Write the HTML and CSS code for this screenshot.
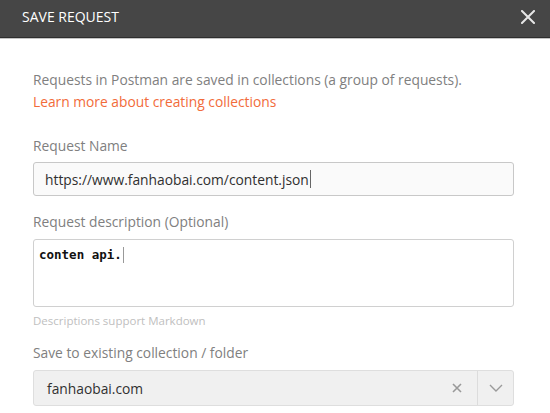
FILE: index.html
```html
<!DOCTYPE html>
<html>
<head>
<meta charset="utf-8">
<link rel="stylesheet" href="styles.css">
</head>
<body>
<div class="modal">
  <div class="header">
    <span class="title">SAVE REQUEST</span>
    <svg class="close" width="14" height="14" viewBox="0 0 14 14"><path d="M1 1 L13 13 M13 1 L1 13" stroke="#e6e6e6" stroke-width="2" stroke-linecap="square"/></svg>
  </div>
  <div class="content">
    <p class="intro">Requests in Postman are saved in collections (a group of requests).<br><a class="link">Learn more about creating collections</a></p>
    <label class="label label-name">Request Name</label>
    <div class="input">https://www.fanhaobai.com/content.json<span class="caret"></span></div>
    <label class="label label-desc">Request description (Optional)</label>
    <div class="textarea">conten api.<span class="caret"></span></div>
    <div class="hint">Descriptions support Markdown</div>
    <label class="label label-coll">Save to existing collection / folder</label>
    <div class="select">
      <span class="value">fanhaobai.com</span>
      <svg class="clear" width="10" height="10" viewBox="0 0 10 10"><path d="M1 1 L9 9 M9 1 L1 9" stroke="#999" stroke-width="1.6"/></svg>
      <span class="arrow"><svg width="14" height="8" viewBox="0 0 14 8"><path d="M1 1 L7 7 L13 1" fill="none" stroke="#9a9a9a" stroke-width="1.4"/></svg></span>
    </div>
  </div>
</div>
</body>
</html>
```
FILE: styles.css
```css
* { box-sizing: border-box; }
html, body { margin: 0; padding: 0; background: #fff; }
body { font-family: "Open Sans", "Liberation Sans", sans-serif; width: 550px; height: 413px; overflow: hidden; }
.header {
  height: 38px;
  background: #464646;
  border-bottom: 1px solid #2e2e2e;
  box-shadow: 0 1px 0 #c4c4c4;
  display: flex;
  align-items: center;
  justify-content: space-between;
  padding: 0 15px 0 22px;
}
.title { color: #fff; font-size: 14px; padding-bottom: 5px; }
.close { margin-bottom: 4px; }
.content { padding: 31px 36px 0 33px; }
.intro { margin: 0; font-size: 13.8px; line-height: 22px; color: #808080; }
.link { color: #f26b3a; }
.label { display: block; font-size: 13.8px; color: #808080; line-height: 20px; }
.label-name { margin-top: 23px; }
.label-desc { margin-top: 16px; }
.label-coll { margin-top: 14px; }
.input {
  margin-top: 6px;
  height: 34px;
  border: 1px solid #c8c8c8;
  border-radius: 3px;
  background: #fafafa;
  padding: 0 11px;
  font-size: 13.8px;
  color: #303030;
  display: flex;
  align-items: center;
}
.caret { display: inline-block; width: 1px; height: 18px; background: #666; margin-left: 1px; }
.textarea {
  margin-top: 7px;
  height: 68px;
  border: 1px solid #d0d0d0;
  border-radius: 3px;
  background: #fff;
  padding: 6px 5px;
  font-family: "DejaVu Sans Mono", monospace;
  font-size: 12.5px;
  font-weight: 600;
  color: #111;
  line-height: 18px;
  display: flex;
  align-items: flex-start;
}
.textarea .caret { height: 16px; margin-top: 1px; background: #999; }
.hint { font-size: 11.5px; color: #c0c0c0; margin-top: 6px; line-height: 16px; }
.select {
  margin-top: 7px;
  height: 36px;
  border: 1px solid #dedede;
  border-radius: 3px;
  background: #f0f0f0;
  display: flex;
  align-items: center;
  font-size: 13.8px;
  color: #303030;
}
.value { flex: 1; padding-left: 13px; }
.clear { margin-right: 15px; }
.arrow {
  width: 36px;
  height: 100%;
  border-left: 1px solid #dcdcdc;
  display: flex;
  align-items: center;
  justify-content: center;
}
```
